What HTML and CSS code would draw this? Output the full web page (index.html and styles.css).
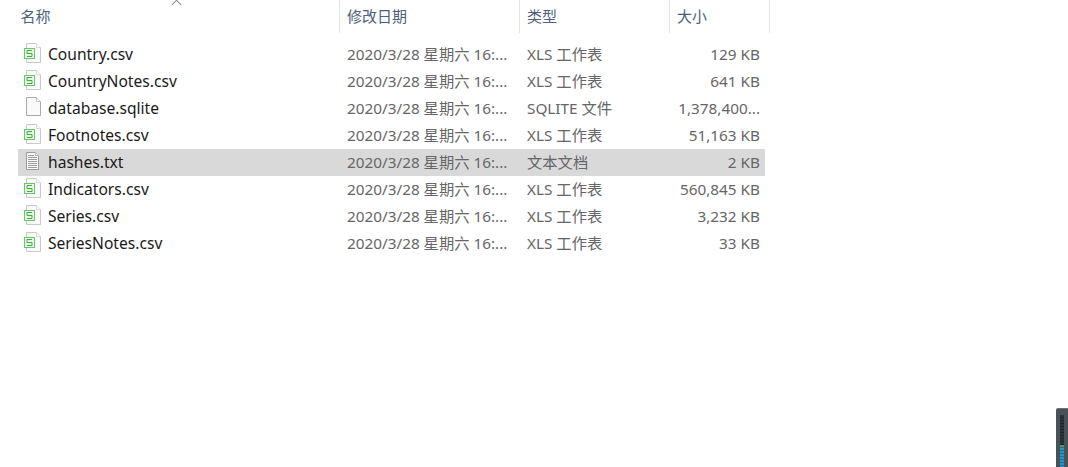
FILE: index.html
```html
<!DOCTYPE html>
<html lang="zh-CN">
<head>
    <meta charset="UTF-8">
    <title>文件列表</title>
    <link rel="stylesheet" href="styles.css">
</head>
<body>
    <svg class="defs" width="0" height="0">
        <symbol id="icon-blank" viewBox="0 0 19 22">
            <path d="M3.5 1.5H13.5L17.5 5.5V19.5H3.5Z" fill="#fafafa" stroke="#a9a9a9"/>
            <path d="M13.5 1.5V5.5H17.5" fill="#fff" stroke="#c4c4c4"/>
        </symbol>
        <symbol id="icon-sheet" viewBox="0 0 19 22">
            <path d="M3.5 1.5H13.5L17.5 5.5V20.5H3.5Z" fill="#fafafa" stroke="#c9c9c9"/>
            <path d="M13.5 1.5V5.5H17.5" fill="#fff" stroke="#dadada"/>
            <rect x="1.5" y="6.5" width="10" height="10" fill="#e9f7e9" stroke="#69c769"/>
            <path d="M9 8.5H4V11.5H9V14.5H4" fill="none" stroke="#3fae3f"/>
        </symbol>
        <symbol id="icon-text" viewBox="0 0 19 22">
            <path d="M3.5 2.5H12.5L15.5 5.5V19.5H3.5Z" fill="#fafafa" stroke="#9a9a9a"/>
            <path d="M12.5 2.5V5.5H15.5" fill="#fff" stroke="#b5b5b5"/>
            <path d="M5 5.5H11M5 7.5H14M5 9.5H14M5 11.5H14M5 13.5H14M5 15.5H14M5 17.5H14" stroke="#9c9c9c"/>
        </symbol>
    </svg>

    <div class="header">
        <div class="head-cell head-name">名称<span class="sort-arrow"></span></div>
        <div class="head-cell">修改日期</div>
        <div class="head-cell">类型</div>
        <div class="head-cell">大小</div>
    </div>

    <div class="file-list">
        <div class="file-row">
            <div class="file-name"><svg class="file-icon"><use href="#icon-sheet"/></svg>Country.csv</div>
            <div class="file-cell">2020/3/28 星期六 16:...</div>
            <div class="file-cell">XLS 工作表</div>
            <div class="file-cell file-size">129 KB</div>
        </div>
        <div class="file-row">
            <div class="file-name"><svg class="file-icon"><use href="#icon-sheet"/></svg>CountryNotes.csv</div>
            <div class="file-cell">2020/3/28 星期六 16:...</div>
            <div class="file-cell">XLS 工作表</div>
            <div class="file-cell file-size">641 KB</div>
        </div>
        <div class="file-row">
            <div class="file-name"><svg class="file-icon"><use href="#icon-blank"/></svg>database.sqlite</div>
            <div class="file-cell">2020/3/28 星期六 16:...</div>
            <div class="file-cell">SQLITE 文件</div>
            <div class="file-cell file-size">1,378,400...</div>
        </div>
        <div class="file-row">
            <div class="file-name"><svg class="file-icon"><use href="#icon-sheet"/></svg>Footnotes.csv</div>
            <div class="file-cell">2020/3/28 星期六 16:...</div>
            <div class="file-cell">XLS 工作表</div>
            <div class="file-cell file-size">51,163 KB</div>
        </div>
        <div class="file-row selected">
            <div class="file-name"><svg class="file-icon"><use href="#icon-text"/></svg>hashes.txt</div>
            <div class="file-cell">2020/3/28 星期六 16:...</div>
            <div class="file-cell">文本文档</div>
            <div class="file-cell file-size">2 KB</div>
        </div>
        <div class="file-row">
            <div class="file-name"><svg class="file-icon"><use href="#icon-sheet"/></svg>Indicators.csv</div>
            <div class="file-cell">2020/3/28 星期六 16:...</div>
            <div class="file-cell">XLS 工作表</div>
            <div class="file-cell file-size">560,845 KB</div>
        </div>
        <div class="file-row">
            <div class="file-name"><svg class="file-icon"><use href="#icon-sheet"/></svg>Series.csv</div>
            <div class="file-cell">2020/3/28 星期六 16:...</div>
            <div class="file-cell">XLS 工作表</div>
            <div class="file-cell file-size">3,232 KB</div>
        </div>
        <div class="file-row">
            <div class="file-name"><svg class="file-icon"><use href="#icon-sheet"/></svg>SeriesNotes.csv</div>
            <div class="file-cell">2020/3/28 星期六 16:...</div>
            <div class="file-cell">XLS 工作表</div>
            <div class="file-cell file-size">33 KB</div>
        </div>
    </div>

    <div class="tray-widget"><div class="tray-meter"></div></div>
</body>
</html>
```
FILE: styles.css
```css
html, body {
    height: 100%;
}
body {
    margin: 0;
    background: #fff;
    font-family: "Noto Sans", "Noto Sans CJK SC", sans-serif;
    font-size: 15px;
    overflow: hidden;
}
.defs {
    display: block;
    height: 0;
}
.header {
    display: grid;
    grid-template-columns: 340px 180px 150px 100px;
    width: 771px;
    height: 32px;
    color: #4c607a;
}
.head-cell {
    position: relative;
    padding-left: 7px;
    line-height: 33px;
    border-right: 1px solid #e5e5e5;
}
.head-name {
    padding-left: 20.5px;
}
.sort-arrow {
    position: absolute;
    left: 173px;
    top: 0;
    width: 6px;
    height: 6px;
    border-left: 1px solid #8a8a8a;
    border-top: 1px solid #8a8a8a;
    transform: translateY(1px) rotate(45deg);
}
.file-list {
    margin: 9px 0 0 18px;
    width: 747px;
}
.file-row {
    display: grid;
    grid-template-columns: 322px 180px 150px 95px;
    height: 27px;
    line-height: 27px;
    font-size: 15.3px;
    color: #666;
}
.file-row.selected {
    background: #d9d9d9;
}
.file-name {
    display: flex;
    align-items: center;
    gap: 6px;
    padding-left: 5px;
    font-size: 15.6px;
    color: #1a1a1a;
}
.file-icon {
    width: 19px;
    height: 22px;
    margin-top: -3px;
}
.file-cell {
    padding-left: 7px;
    white-space: nowrap;
}
.file-size {
    padding: 0 5px 0 0;
    text-align: right;
}
.tray-widget {
    position: absolute;
    right: 0;
    bottom: 0;
    width: 12px;
    height: 59px;
    background: #4a5259;
    border-top: 1px solid #6a7076;
    box-sizing: border-box;
    border-radius: 2px 0 0 0;
}
.tray-meter {
    width: 4px;
    height: 52px;
    margin: 6px 0 0 4px;
    background: repeating-linear-gradient(to bottom, transparent 0 2px, rgba(0, 0, 0, 0.25) 2px 3px),
        linear-gradient(to bottom, #2d333d 0 30px, #3f9a7e 30px 34px, #2595c9 34px);
}
```
